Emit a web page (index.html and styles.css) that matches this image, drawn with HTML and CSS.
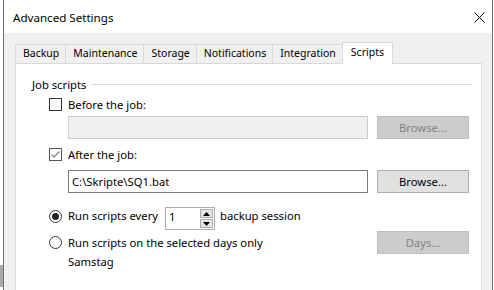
FILE: index.html
```html
<!DOCTYPE html>
<html>
<head>
<meta charset="utf-8">
<link rel="stylesheet" href="styles.css">
</head>
<body>
<div class="behind"><span class="scrollthumb"></span></div>
<div class="window">
  <div class="titlebar">
    <span class="title">Advanced Settings</span>
    <svg class="close" width="11" height="11" viewBox="0 0 11 11"><path d="M0.5 0.5 L10.5 10.5 M10.5 0.5 L0.5 10.5" stroke="#000" stroke-width="1"/></svg>
  </div>
  <div class="client">
    <div class="tabs">
      <div class="tab">Backup</div>
      <div class="tab">Maintenance</div>
      <div class="tab">Storage</div>
      <div class="tab">Notifications</div>
      <div class="tab">Integration</div>
      <div class="tab active">Scripts</div>
    </div>
    <div class="panel">
      <div class="group-head"><span>Job scripts</span><span class="rule"></span></div>
      <div class="row check-row">
        <span class="cbox"></span><span>Before the job:</span>
      </div>
      <div class="row field-row">
        <div class="textbox disabled"></div>
        <div class="btn disabled">Browse...</div>
      </div>
      <div class="row check-row second">
        <span class="cbox checked"><svg width="11" height="11" viewBox="0 0 11 11"><path d="M1.5 5.5 L4 8 L9.5 2.5" fill="none" stroke="#777" stroke-width="1.1"/></svg></span><span>After the job:</span>
      </div>
      <div class="row field-row">
        <div class="textbox">C:\Skripte\SQ1.bat</div>
        <div class="btn">Browse...</div>
      </div>
      <div class="row radio-row first">
        <span class="radio on"></span><span class="lbl">Run scripts every</span>
        <div class="spin"><span class="spin-val">1</span><span class="spin-btns"><span class="sb"><svg width="7" height="4" viewBox="0 0 7 4"><path d="M3.5 0 L7 4 L0 4Z" fill="#000"/></svg></span><span class="sb"><svg width="7" height="4" viewBox="0 0 7 4"><path d="M0 0 L7 0 L3.5 4Z" fill="#000"/></svg></span></span></div>
        <span class="lbl">backup session</span>
      </div>
      <div class="row radio-row days">
        <span class="radio"></span><span class="days-lbl">Run scripts on the selected days only</span>
        <div class="btn disabled">Days...</div>
      </div>
      <div class="samstag">Samstag</div>
    </div>
  </div>
</div>
</body>
</html>
```
FILE: styles.css
```css
html, body { margin: 0; padding: 0; }
body {
  width: 494px; height: 290px; overflow: hidden;
  display: flex; background: #fff;
  font-family: "Noto Sans", "Open Sans", sans-serif;
  font-size: 11.25px; color: #000;
}
.behind { width: 3px; position: relative; background: #fff; flex: none; }
.scrollthumb { position: absolute; left: 0; top: 265px; width: 3px; height: 22px; background: #a8a8a8; }
.window {
  width: 488px; height: 290px; flex: none; overflow: hidden;
  border-left: 1px solid #6f6f6f; border-right: 1px solid #6f6f6f;
  background: #f0f0f0; display: flex; flex-direction: column;
}
.titlebar {
  height: 33px; background: #fff; display: flex; align-items: center;
  padding: 0 7px 0 9px; justify-content: space-between; flex: none;
}
.title { font-size: 11.6px; margin-top: 1px; }
.close { margin-top: 2px; }
.client { padding: 9px 10px 0 11px; }
.tabs { display: flex; align-items: flex-end; height: 21px; position: relative; z-index: 1; }
.tab {
  height: 18px; line-height: 17px; padding: 0 6px 0 7px;
  border: 1px solid #d9d9d9; border-bottom: none; margin-left: -1px;
  background: #f0f0f0; white-space: nowrap; text-align: center; font-size: 10.5px;
}
.tab:first-child { margin-left: 0; }
.tab.active {
  height: 21px; line-height: 18px; background: #fff; padding: 0 8px;
  margin-bottom: -1px;
}
.panel {
  background: #fff; border: 1px solid #d9d9d9; height: 230px;
  padding: 12px 9px 0 16px;
}
.group-head { display: flex; align-items: center; height: 16px; }
.group-head .rule { flex: 1; height: 1px; background: #dcdcdc; margin-left: 5px; margin-top: 1px; }
.row { display: flex; align-items: center; }
.check-row { padding-left: 17px; margin-top: 6px; height: 13px; gap: 6px; }
.cbox {
  width: 13px; height: 13px; box-sizing: border-box; border: 1px solid #333; background: #fff;
  display: inline-flex; align-items: center; justify-content: center; flex: none;
}
.cbox.checked { border-color: #555; }
.field-row { padding-left: 36px; margin-top: 5px; gap: 9px; }
.field-row + .check-row { margin-top: 9px; }
.check-row.second + .field-row { margin-top: 9px; }
.textbox {
  width: 300px; height: 23px; box-sizing: border-box; border: 1px solid #7a7a7a; background: #fff;
  line-height: 21px; padding-left: 3px; white-space: nowrap;
}
.textbox.disabled { background: #f0f0f0; border-color: #cccccc; }
.btn {
  width: 92px; height: 23px; box-sizing: border-box; border: 1px solid #adadad; background: #e1e1e1;
  text-align: center; line-height: 21px; flex: none;
}
.btn.disabled { background: #cccccc; border-color: #bfbfbf; color: #838383; }
.radio-row { padding-left: 17px; }
.radio-row.first { margin-top: 14px; height: 23px; align-items: flex-start; }
.radio-row.first .radio { margin-top: 3px; margin-right: 6px; }
.radio-row.first .lbl { line-height: 18px; }
.radio-row.days { margin-top: 1px; height: 23px; }
.radio-row.days .radio { margin-right: 6px; }
.days-lbl { width: 300px; margin-right: 9px; }
.radio {
  width: 13px; height: 13px; box-sizing: border-box; border: 1px solid #333; border-radius: 50%;
  background: #fff; position: relative; flex: none;
}
.radio.on::after {
  content: ""; position: absolute; left: 2px; top: 2px; width: 7px; height: 7px;
  border-radius: 50%; background: #222;
}
.spin {
  width: 50px; height: 23px; box-sizing: border-box; border: 1px solid #acacac; display: flex;
  justify-content: space-between; margin-left: 7px; margin-right: 5px;
}
.spin-val { padding-left: 3px; line-height: 18px; }
.spin-btns { display: flex; flex-direction: column; padding: 1px; gap: 1px; }
.sb {
  width: 13px; height: 9px; box-sizing: border-box; background: #e6e6e6; border: 1px solid #acacac;
  display: flex; align-items: center; justify-content: center;
}
.samstag { padding-left: 36px; line-height: 16px; }
```
